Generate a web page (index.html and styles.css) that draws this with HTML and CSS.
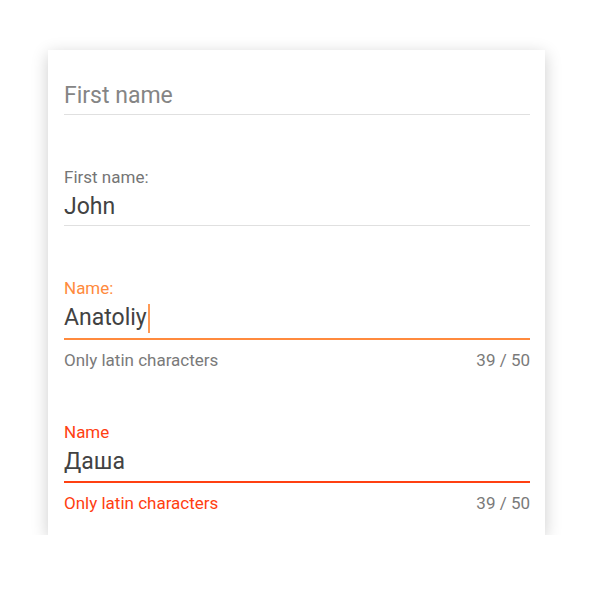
FILE: index.html
```html
<!DOCTYPE html>
<html lang="en">
<head>
    <meta charset="UTF-8">
    <title>Text fields</title>
    <link rel="stylesheet" href="styles.css">
</head>
<body>

<div class="card">
    <div class="field field-empty">
        <div class="field-value placeholder">First name</div>
    </div>

    <div class="field">
        <div class="field-label">First name:</div>
        <div class="field-value">John</div>
    </div>

    <div class="field focused">
        <div class="field-label">Name:</div>
        <div class="field-value">Anatoliy<span class="caret"></span></div>
        <div class="field-help">
            <span>Only latin characters</span>
            <span class="counter">39 / 50</span>
        </div>
    </div>

    <div class="field invalid">
        <div class="field-label">Name</div>
        <div class="field-value">Даша</div>
        <div class="field-help">
            <span>Only latin characters</span>
            <span class="counter">39 / 50</span>
        </div>
    </div>
</div>

</body>
</html>
```

FILE: styles.css
```css
body { margin: 0; padding: 50px 0 0 48px; background: #fff; font-family: Roboto, "Noto Sans", sans-serif; }
.card { width: 466px; padding: 32px 15px 22px 16px; background: #fff; box-shadow: 0 4px 16px rgba(0,0,0,0.2); }

.field + .field { margin-top: 52px; }
.field-label { font-size: 17px; line-height: 20px; margin-bottom: 6px; color: #757575; }
.field-value { font-size: 23px; line-height: 28px; padding-bottom: 4px; color: #424242; border-bottom: 1px solid #e0e0e0; }
.field-value.placeholder { color: #858585; }

.caret { display: inline-block; width: 2px; height: 29px; margin-left: 1px; vertical-align: top; background: #ff9a55; }

.field-help { display: flex; justify-content: space-between; margin-top: 10px; font-size: 17px; line-height: 20px; color: #7a7a7a; }
.field-help .counter { color: #7a7a7a; }

.focused .field-label { color: #ff8a3d; }
.focused .field-value { padding-bottom: 5px; border-bottom: 2px solid #ff8a3d; }

.invalid .field-label { color: #ff4011; }
.invalid .field-value { padding-bottom: 5px; border-bottom: 2px solid #ff4011; }
.invalid .field-help { color: #ff4011; }
```
